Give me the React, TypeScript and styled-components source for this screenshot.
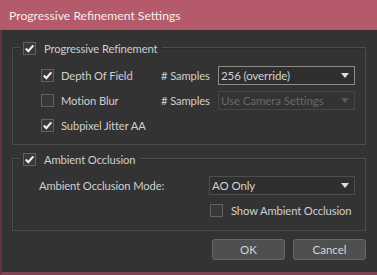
import React from "react";
import styled, { createGlobalStyle } from "styled-components";

const Global = createGlobalStyle`
  html, body { margin: 0; padding: 0; background: #333333; }
  body { font-family: Lato, "Noto Sans", sans-serif; }
`;

const Window = styled.div`
  width: 377px;
  height: 275px;
  display: flex;
  flex-direction: column;
  background: #333333;
  overflow: hidden;
  white-space: nowrap;
`;

const TitleBar = styled.div`
  height: 30px;
  flex: none;
  background: #b45a6b;
  color: #f7eaed;
  font-size: 12.2px;
  display: flex;
  align-items: center;
  padding-left: 9px;
  padding-top: 1px;
  box-sizing: border-box;
`;

const Body = styled.div`
  flex: 1;
  display: flex;
  flex-direction: column;
  border-left: 2px solid #5e3342;
  border-bottom: 3px solid #7d4454;
  padding: 17px 11px 0 10px;
  color: #cfcfcf;
  font-size: 11.2px;
  letter-spacing: -0.1px;
`;

const Group = styled.div<{ $pt: number; $pb: number; $pl: number }>`
  position: relative;
  border: 1px solid #4c4c4c;
  box-shadow: inset 1px 1px 0 #2b2b2b;
  padding: ${(p) => p.$pt}px 10px ${(p) => p.$pb}px ${(p) => p.$pl}px;
  display: flex;
  flex-direction: column;
  gap: 6px;
  & + & {
    margin-top: 13px;
  }
`;

const Header = styled.label`
  position: absolute;
  top: -7px;
  left: 7px;
  background: #333333;
  padding: 0 5px 0 3px;
  display: flex;
  align-items: center;
  gap: 8px;
  height: 14px;
  color: #cfcfcf;
`;

const Box = styled.span`
  width: 13px;
  height: 13px;
  flex: none;
  box-sizing: border-box;
  border: 1px solid #626262;
  background: #383838;
  display: flex;
  align-items: center;
  justify-content: center;
`;

const Check = ({ checked }: { checked?: boolean }) => (
  <Box>
    {checked && (
      <svg width="11" height="11" viewBox="0 0 11 11">
        <path d="M1.8 5.6 L4.3 8.2 L9.3 2.4" fill="none" stroke="#f0f0f0" strokeWidth="2.2" />
      </svg>
    )}
  </Box>
);

const SampleRow = styled.div`
  display: grid;
  grid-template-columns: 120px 57px 137px;
  align-items: center;
  height: 19px;
`;

const CheckLabel = styled.label<{ $gap?: number }>`
  display: flex;
  align-items: center;
  gap: ${(p) => p.$gap ?? 7}px;
  margin-top: -1px;
`;

const Caption = styled.span``;

const Select = styled.div<{ $disabled?: boolean; $focus?: boolean }>`
  height: 19px;
  box-sizing: border-box;
  border: 1px solid ${(p) => (p.$focus ? "#8c8c8c" : p.$disabled ? "#464646" : "#4e4e4e")};
  background: ${(p) => (p.$disabled ? "#333333" : "#2f2f2f")};
  color: ${(p) => (p.$disabled ? "#686868" : "#d2d2d2")};
  display: flex;
  align-items: center;
  padding: 0 4px 0 2px;
  justify-content: space-between;
  font-size: 11.5px;
`;

const Arrow = styled.span<{ $disabled?: boolean }>`
  width: 0;
  height: 0;
  border-left: 4px solid transparent;
  border-right: 4px solid transparent;
  border-top: 5px solid ${(p) => (p.$disabled ? "#5a5a5a" : "#e0e0e0")};
  margin-right: 1px;
`;

const ModeRow = styled.div`
  display: grid;
  grid-template-columns: 170px 146px;
  align-items: center;
  height: 19px;
`;

const ShowRow = styled.div`
  display: flex;
  height: 19px;
  align-items: center;
  padding-left: 171px;
`;

const Buttons = styled.div`
  display: flex;
  justify-content: flex-end;
  gap: 8px;
  margin-top: 8px;
`;

const Button = styled.button`
  width: 73px;
  height: 21px;
  box-sizing: border-box;
  border: 1px solid #686868;
  border-radius: 3px;
  background: #4f4f4f;
  color: #d6d6d6;
  font-family: inherit;
  font-size: 11.5px;
  padding: 0;
`;

export default function App() {
  return (
    <Window>
      <Global />
      <TitleBar>Progressive Refinement Settings</TitleBar>
      <Body>
        <Group $pt={18} $pb={9} $pl={28}>
          <Header>
            <Check checked />
            <Caption>Progressive Refinement</Caption>
          </Header>
          <SampleRow>
            <CheckLabel>
              <Check checked />
              <Caption>Depth Of Field</Caption>
            </CheckLabel>
            <Caption># Samples</Caption>
            <Select $focus>
              <span>256 (override)</span>
              <Arrow />
            </Select>
          </SampleRow>
          <SampleRow>
            <CheckLabel>
              <Check />
              <Caption>Motion Blur</Caption>
            </CheckLabel>
            <Caption># Samples</Caption>
            <Select $disabled>
              <span>Use Camera Settings</span>
              <Arrow $disabled />
            </Select>
          </SampleRow>
          <SampleRow>
            <CheckLabel>
              <Check checked />
              <Caption>Subpixel Jitter AA</Caption>
            </CheckLabel>
          </SampleRow>
        </Group>
        <Group $pt={17} $pb={10} $pl={26}>
          <Header>
            <Check checked />
            <Caption>Ambient Occlusion</Caption>
          </Header>
          <ModeRow>
            <Caption>Ambient Occlusion Mode:</Caption>
            <Select>
              <span>AO Only</span>
              <Arrow />
            </Select>
          </ModeRow>
          <ShowRow>
            <CheckLabel $gap={8}>
              <Check />
              <Caption>Show Ambient Occlusion</Caption>
            </CheckLabel>
          </ShowRow>
        </Group>
        <Buttons>
          <Button>OK</Button>
          <Button>Cancel</Button>
        </Buttons>
      </Body>
    </Window>
  );
}
